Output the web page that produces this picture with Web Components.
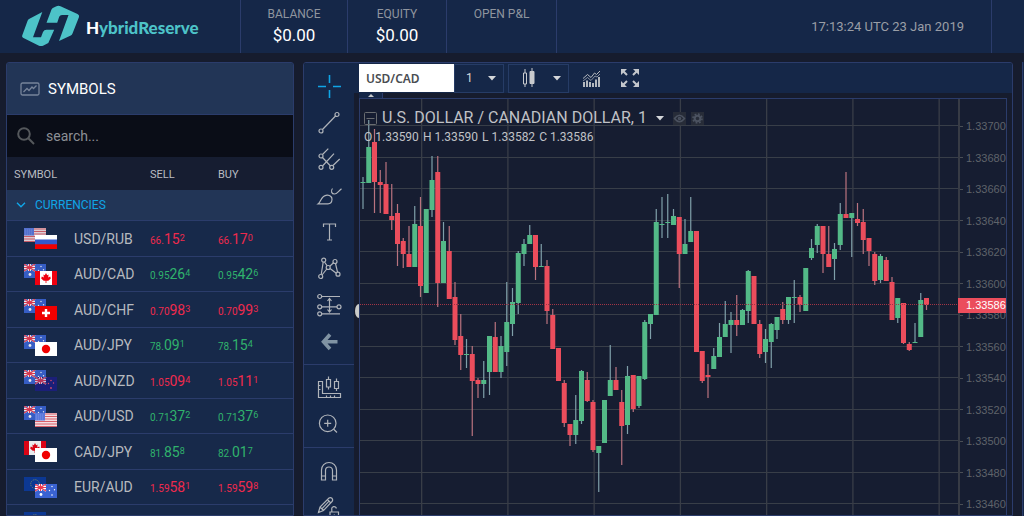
<!DOCTYPE html>
<html lang="en">
<head>
<meta charset="utf-8">
<title>HybridReserve trading terminal</title>
<style>
:root{--line:#2b3c6b;--bar:#152748;--page:#161c2e;--raised:#223556;--ink:#c3c6cb;--up:#53b987;--down:#eb4d5c}
html,body{margin:0;height:100%;overflow:hidden;background:var(--page);font-family:Roboto,"Liberation Sans",sans-serif;color:var(--ink)}
</style>
</head>
<body>
<trading-app></trading-app>

<script>
const define = (name, html, setup) => customElements.define(name, class extends HTMLElement {
  constructor() {
    super();
    const t = document.createElement('template');
    t.innerHTML = html;
    this.attachShadow({ mode: 'open' }).append(t.content.cloneNode(true));
    if (setup) setup(this.shadowRoot, this);
  }
});

/* ---------- header ---------- */
define('account-stat', `
<style>
:host{display:flex;flex-direction:column;align-items:center;box-sizing:border-box;padding-top:7px;border-right:1px solid var(--line)}
.label{font-size:12px;line-height:14px;color:#8f959f}
.value{font-size:17px;line-height:20px;margin-top:4px;color:#fff}
</style>
<div class="label"><slot name="label"></slot></div>
<div class="value"><slot></slot></div>`);

define('brand-logo', `
<style>
:host{display:flex;box-sizing:border-box;width:241px;padding-left:20px;align-items:center;border-right:1px solid var(--line)}
a{display:flex;gap:5px;align-items:center;color:#4dc3c8;text-decoration:none;font:900 17px/20px Lato,sans-serif}
span{padding-top:2px}
b{color:#fff;font-weight:900}
svg{display:block}
</style>
<a href="#"><svg width="61" height="50" viewBox="0 0 61 50" fill="#4dc3c8">
<path d="M22.300 10 9 17Q8 17.600 7.600 18.700L2.200 33.500Q1.700 35 3 35.800L18.500 43.500Q21 44.700 23.500 43.500L28.300 41 34.200 27.800H26.500Q24 27.800 23 30L21 35.200H13Z"/>
<path d="M26.500 20.800 31.500 7.600Q32 6.300 33.300 5.700L36.500 4.200Q38.500 3.400 40.500 4.300L57.500 12Q59.600 13 59 15L52.500 31.500Q52 32.800 50.800 33.500L39 39 48.500 13H42Q40 13 39.200 14.800L37.200 20.800Z"/>
</svg><span><b>H</b>ybridReserve</span></a>`);

define('app-header', `
<style>
:host{display:flex;height:53px;background:var(--bar)}
account-stat:nth-of-type(1){width:107px}
account-stat:nth-of-type(2){width:99px}
account-stat:nth-of-type(3){width:110px}
time{flex:1;text-align:right;padding-right:27px;font-size:13px;line-height:53px;color:#9a9ea6;border-right:1px solid var(--line)}
.end{width:32px}
</style>
<brand-logo></brand-logo>
<account-stat><span slot="label">BALANCE</span>$0.00</account-stat>
<account-stat><span slot="label">EQUITY</span>$0.00</account-stat>
<account-stat><span slot="label">OPEN P&amp;L</span></account-stat>
<time datetime="2019-01-23T17:13:24Z">17:13:24 UTC 23 Jan 2019</time>
<div class="end"></div>`);

/* ---------- currency flags ---------- */
const jack = '<path d="M0 0 11 7M11 0 0 7" stroke="#e8eaf6" stroke-width="1.600"/><path d="M5.500 0V7M0 3.500H11" stroke="#fff" stroke-width="3"/><path d="M5.500 0V7M0 3.500H11M0 0 11 7M11 0 0 7" stroke="#ec3a50" stroke-width="1.200"/>';
const star = (x, y, r) => `<circle cx="${x}" cy="${y}" r="${r}" fill="#fff"/>`;
const FLAGS = {
  USD: '<path fill="#f3dfe2" d="M0 0H22V14H0z"/><path d="M0 1H22M0 3.500H22M0 6H22M0 8.500H22M0 11H22M0 13.500H22" stroke="#d9606a" stroke-width="1.200"/><path fill="#5b78dc" d="M0 0H10V7.500H0z"/><path d="M1 2H9M1 4H9M1 6H9" stroke="#8fa5ec" stroke-width=".6" stroke-dasharray="1 1"/>',
  RUB: '<path fill="#fff" d="M0 0H22V14H0z"/><path fill="#3358cc" d="M0 4.500H22V14H0z"/><path fill="#f00000" d="M0 9.300H22V14H0z"/>',
  AUD: '<path fill="#3a63d2" d="M0 0H22V14H0z"/>' + jack + star(6, 10.5, 1.4) + star(17, 2.5, .7) + star(14.5, 6.5, .7) + star(19.5, 5.8, .7) + star(17, 11, .8),
  CAD: '<path fill="#fff" d="M0 0H22V14H0z"/><path fill="#f00010" d="M0 0H5V14H0zM17 0H22V14H17zM11 2 12.200 4.200 13.600 3.600 13.200 6.500 15.200 5.500 15.800 7.400 13.300 9.800H11.400V12H10.600V9.800H8.700L6.200 7.400 6.800 5.500 8.800 6.500 8.400 3.600 9.800 4.200z"/>',
  CHF: '<path fill="#f00000" d="M0 0H22V14H0z"/><path d="M11 3V11M7 7H15" stroke="#fff" stroke-width="2.400"/>',
  JPY: '<path fill="#fff" d="M0 0H22V14H0z"/><circle cx="11" cy="7" r="4.200" fill="#f00000"/>',
  NZD: '<path fill="#1b1f78" d="M0 0H22V14H0z"/><g opacity=".75">' + jack + '</g><g fill="#d44a6a"><circle cx="16" cy="3.500" r=".8"/><circle cx="13.500" cy="6.500" r=".7"/><circle cx="18.500" cy="6" r=".7"/><circle cx="16" cy="11" r=".9"/></g>',
  EUR: '<path fill="#0b3a9c" d="M0 0H22V14H0z"/><circle cx="11" cy="7" r="4.300" fill="none" stroke="#9aa35a" stroke-dasharray="1 1.250"/>'
};
define('pair-flags', `
<style>:host{display:block;width:33px;height:21px}svg{display:block}</style>
<svg width="33" height="21" viewBox="0 0 33 21" aria-hidden="true"></svg>`, (root, host) => {
  const [a, b] = host.getAttribute('pair').split('/');
  root.querySelector('svg').innerHTML = `<svg width="22" height="14" opacity=".9">${FLAGS[a]}</svg><svg x="11" y="7" width="22" height="14">${FLAGS[b]}</svg>`;
});

/* ---------- symbols panel ---------- */
const QUOTES = [
  ['USD/RUB', 'down', '66.', '15', '2', '66.', '17', '0'],
  ['AUD/CAD', 'up', '0.95', '26', '4', '0.95', '42', '6'],
  ['AUD/CHF', 'down', '0.70', '98', '3', '0.70', '99', '3'],
  ['AUD/JPY', 'up', '78.', '09', '1', '78.', '15', '4'],
  ['AUD/NZD', 'down', '1.05', '09', '4', '1.05', '11', '1'],
  ['AUD/USD', 'up', '0.71', '37', '2', '0.71', '37', '6'],
  ['CAD/JPY', 'up', '81.', '85', '8', '82.', '01', '7'],
  ['EUR/AUD', 'down', '1.59', '58', '1', '1.59', '59', '8']
];
define('symbols-panel', `
<style>
:host{display:block;border:1px solid var(--line);border-radius:3px 3px 0 0;background:#17294a;overflow:hidden}
h2{display:flex;align-items:center;gap:8px;margin:0;height:51px;padding-left:13px;background:var(--raised);border-bottom:1px solid var(--line);font-weight:400;font-size:15px;color:#fff}
label{display:flex;align-items:center;gap:11px;height:42px;padding-left:10px;background:#0a0d17}
input{flex:1;min-width:0;border:0;padding:0;background:none;outline:0;font:14px/20px Roboto,sans-serif;color:#fff}
input::placeholder{color:#8d9096;opacity:1}
table{width:100%;border-collapse:separate;border-spacing:0;table-layout:fixed}
th{font-weight:400;text-align:left;padding:0}
thead th{box-sizing:border-box;height:33px;padding-top:2px;font-size:11px;color:#b9bcc2;background:#161d31}
thead th:first-child{padding-left:7px;width:143px}
thead th:nth-child(2){width:68px}
.group th{height:30px;background:var(--raised);border-bottom:1px solid var(--line)}
button{display:flex;align-items:center;gap:9px;border:0;background:none;padding:0 0 0 9px;font:12px/16px Roboto,sans-serif;color:#10a5e6}
tbody td,tbody .sym{padding:0;box-sizing:border-box;height:35px;border-bottom:1px solid var(--line)}
tr:nth-child(odd) td,tr:nth-child(odd) .sym{height:36px}
.sym div{display:flex;align-items:center;gap:17px;padding-left:17px;font-size:14px;line-height:20px;color:#b6b9bf}
tbody td{font-size:10px;white-space:nowrap}
td big{font-size:14px}
td sup{font-size:9px;line-height:0;vertical-align:3px}
.up td{color:#30b26c}.down td{color:#ef2a4d}
</style>
<h2><svg width="20" height="14" fill="none" stroke="#77849a" stroke-width="1.300"><rect x="1" y="1" width="18" height="12" rx="1.500"/><path d="M3.500 10 7 6.500 9 8.500 12 5 13.500 6.500 16.500 3.500"/></svg>SYMBOLS</h2>
<label><svg width="18" height="18" fill="none" stroke="#55585c" stroke-width="2"><circle cx="7" cy="7" r="5.800"/><path d="M11.300 11.300 17 17"/></svg><input type="search" placeholder="search..." aria-label="Search symbols"></label>
<table>
<thead><tr><th>SYMBOL</th><th>SELL</th><th>BUY</th></tr></thead>
<tbody><tr class="group"><th colspan="3"><button type="button"><svg width="10" height="6" fill="none" stroke="#10a5e6" stroke-width="1.400"><path d="M1 .8 5 4.800 9 .8"/></svg>CURRENCIES</button></th></tr></tbody>
<tbody id="rows"></tbody>
</table>`, root => {
  const cell = (a, b, c) => `<td>${a}<big>${b}</big><sup>${c}</sup></td>`;
  const flags = pair => `<pair-flags pair="${pair}"></pair-flags>`;
  root.getElementById('rows').innerHTML = QUOTES.map(q =>
    `<tr class="${q[1]}"><th class="sym" scope="row"><div>${flags(q[0])}${q[0]}</div></th>${cell(q[2], q[3], q[4])}${cell(q[5], q[6], q[7])}</tr>`).join('')
    // still waiting for its first quote
    + `<tr><th class="sym" scope="row"><div>${flags('EUR/CAD')}</div></th><td></td><td></td></tr>`;
});

/* ---------- drawing tools ---------- */
const TOOLS = [
  [['Crosshair', '<path stroke="#10a5e6" stroke-width="1.600" d="M2 13.500H10M17 13.500H25M13.500 2V10M13.500 17V25"/>'],
   ['Trend line', '<circle cx="5" cy="21" r="2"/><circle cx="21" cy="4.500" r="2"/><path d="M6.500 19.500 19.500 6"/>'],
   ['Pitchfork', '<circle cx="5" cy="10" r="2"/><circle cx="5" cy="21.300" r="2"/><circle cx="15.700" cy="21.300" r="2"/><path d="M6.500 8.500 12.300 2.700M6.500 20 18 7.700M17 19.500 23.700 13M6.500 11.500 14.500 20"/>'],
   ['Brush', '<path d="M2.300 20.800C5 19 5 12.500 11 12.200 14.500 12 16.200 14.500 16 16.500 15.800 19 14 20.800 12 20.800ZM16.500 5.500C14.500 8 15.500 11 18.500 11 21 11 22 8.500 25.500 5.800"/>'],
   ['Text', '<path d="M7.500 8V5H19.500V8M13.500 5V21M11 21H16"/>'],
   ['Pattern', '<circle cx="7.700" cy="4.200" r="2"/><circle cx="19" cy="5.500" r="2"/><circle cx="12.200" cy="11.500" r="2"/><circle cx="4.700" cy="20.500" r="2"/><circle cx="22" cy="18.200" r="2"/><path d="M5.200 18.500 7.200 6.200M8.500 6 11.200 9.800M13.800 10.200 17.500 6.800M19.500 7.500 21.500 16.200M6 19 10.800 13M14 12.500 20.300 17.200"/>'],
   ['Forecast', '<circle cx="3.700" cy="4.500" r="2"/><circle cx="3.700" cy="14.800" r="2"/><circle cx="23" cy="14.800" r="2"/><circle cx="3.700" cy="21.800" r="2"/><path d="M5.700 4.500H24M5.700 14.800H21M5.700 21.800H24M13.500 7V19M11.500 9 13.500 6.500 15.500 9M11.500 17.500 13.500 20 15.500 17.500"/>'],
   ['Hide tools', '<path stroke="#8093a3" stroke-width="3.600" d="M14 5.500 7.500 12.800 14 20M8 12.800H21.500"/>']],
  [['Measure', '<path d="M2.500 6.500V22.500H24.500V18.500H6.500V6.500ZM2.500 10.500H4.500M2.500 14.500H4.500M10.500 22V20.500M14.500 22V20.500M18.500 22V20.500"/><path d="M10.500 4.500H14.500V12H10.500ZM12.500 1.500V4.500M12.500 12V14.500M18.500 6.500H22.500V13.500H18.500ZM20.500 3.500V6.500M20.500 13.500V16"/>'],
   ['Zoom in', '<circle cx="11.700" cy="11.300" r="8.300"/><path d="M11.700 7.800V14.800M8.200 11.300H15.200M17.700 17.300 21 20.500"/>']],
  [['Magnet', '<path d="M5.500 22V12A7.500 7.500 0 0 1 20.500 12V22H16.500V12.500A3.500 3.500 0 0 0 9.500 12.500V22ZM5.500 18H9.500M16.500 18H20.500"/>'],
   ['Lock drawings', '<path d="M2.500 17.500 4 12 13 3Q14.500 2 16 3.300 17.300 5 16 6.500L7.500 15.500ZM4 12 7.500 15.500M11.500 4.500 14.700 7.800M5.800 13.800 13 6.200"/><path d="M14 17H22.500V25H14ZM15.800 17V14.500A2.300 2.300 0 0 1 20.400 13.500M18.300 19.500V21.500"/>']]
];
define('tool-rail', `
<style>
:host{display:block;width:50px;background:var(--bar)}
div{display:flex;flex-direction:column;align-items:center;padding:5px 0 4px;border-bottom:1px solid var(--line)}
button{width:50px;height:36px;flex:none;padding:0;border:0;background:none;display:flex;align-items:center;justify-content:center}
div button:nth-child(even){height:37px}
svg{display:block;overflow:visible}
</style>`, root => {
  root.innerHTML += TOOLS.map(g => '<div role="group">' + g.map(([n, p]) =>
    `<button type="button" title="${n}"><svg width="26" height="26" fill="none" stroke="#b0b4ba" stroke-width="1.200">${p}</svg></button>`).join('') + '</div>').join('');
});

/* ---------- chart toolbar ---------- */
define('chart-toolbar', `
<style>
:host{display:flex;height:30px;align-items:center;background:var(--bar);color:#d5d7da}
input{box-sizing:border-box;width:95px;height:28px;border:0;border-radius:0;padding:0 7px;font:600 12px/20px "Noto Sans","Open Sans",sans-serif;color:#4a4d52;background:#fff;outline:0}
button{box-sizing:border-box;height:29px;display:flex;align-items:center;padding:0;border:0;background:none;color:inherit;font:12px/16px Roboto,sans-serif}
.box{border:1px solid #263c66}
.interval{width:50px;padding-left:11px;gap:15px}
.kind{width:61px;padding-left:12px;gap:17px;margin-left:4px}
.ind{margin-left:13px}
.full{margin-left:20px}
svg{display:block}
</style>
<input type="text" value="USD/CAD" aria-label="Symbol">
<button type="button" class="box interval">1<svg width="8" height="5" fill="#d5d7da"><path d="M0 0H8L4 4.500z"/></svg></button>
<button type="button" class="box kind" title="Candles"><svg width="15" height="20" fill="none" stroke="#c8cacd"><path d="M4 1V5M4 16V19M2.500 5H5.500V16H2.500ZM11 0V19"/><path fill="#c8cacd" d="M9 3.500H13V15.500H9z"/></svg><svg width="8" height="5" fill="#d5d7da"><path d="M0 0H8L4 4.500z"/></svg></button>
<button type="button" class="ind" title="Indicators"><svg width="19" height="17" fill="none" stroke="#b4b8be"><path stroke-width="2" d="M2 17V12M5 17V10.500M8 17V12M11 17V13M14 17V9.500M17 17V7"/><path d="M1 8.500 5.500 4.500 9 7.500 12.500 3 14.500 4.500 18 1"/><path stroke-width=".7" d="M1 11 5.500 7.500 9 10.500 13 6 15 7 18 4"/></svg></button>
<button type="button" class="full" title="Full screen"><svg width="18" height="18" fill="#c4c7cc" stroke="#c4c7cc" stroke-width="2"><path stroke="none" d="M0 0H6L0 6zM18 0V6L12 0zM0 18V12L6 18zM18 18H12L18 12z"/><path d="M2 2 6 6M16 2 12 6M2 16 6 12M16 16 12 12"/></svg></button>`);

/* ---------- price chart ---------- */
// high, body top, body bottom, low, direction (1 = rising)
const CANDLES = [
[177,182,183,209,1],[120,147,183,183,1],[129,142,182,213,0],[170,182,185,213,0],[162,184,214,214,0],[184,216,220,230,0],[204,213,244,266,0],[238,241,254,268,0],[226,254,267,267,0],[206,224,267,267,1],
[197,226,286,297,0],[209,209,293,293,1],[156,180,210,217,1],[156,172,283,307,0],[222,241,283,283,1],[226,251,299,299,0],[282,297,340,345,0],[314,336,355,370,0],[339,354,355,368,1],[346,354,381,436,0],
[378,380,384,398,0],[361,380,384,398,1],[336,336,372,395,1],[322,337,372,372,0],[336,346,372,378,1],[282,322,352,366,1],[288,302,324,336,1],[251,253,303,314,1],[239,244,254,266,1],[225,235,244,244,1],
[235,235,267,280,0],[244,266,267,267,1],[260,266,311,324,0],[309,315,349,349,0],[348,348,381,381,0],[380,383,423,427,0],[424,424,435,446,0],[395,420,435,444,1],[370,371,421,424,1],[372,380,401,402,0],
[400,402,450,452,0],[446,446,453,492,1],[400,400,443,443,1],[345,380,396,396,1],[367,380,390,390,0],[390,402,426,465,0],[366,376,425,434,1],[375,375,409,412,0],[376,376,406,408,1],[320,322,379,380,1],
[314,314,324,339,1],[209,222,315,315,1],[197,224,225,238,1],[194,222,223,238,1],[209,216,225,225,1],[217,217,254,288,0],[219,244,254,254,1],[197,231,242,242,1],[231,231,352,352,0],[351,351,381,383,0],
[364,375,377,398,0],[348,356,369,369,1],[323,337,357,357,1],[301,324,337,337,1],[312,320,325,353,1],[295,320,325,336,0],[309,310,325,325,1],[270,271,311,323,1],[276,276,324,324,0],[320,324,354,358,0],
[329,339,352,363,1],[323,324,342,368,1],[317,317,330,339,1],[302,309,320,324,0],[297,297,320,324,1],[280,297,298,323,1],[295,297,305,312,0],[268,268,311,311,1],[239,248,258,260,1],[224,226,245,253,1],
[226,226,254,273,0],[226,254,267,267,0],[243,249,259,280,1],[203,214,245,250,1],[172,214,218,218,0],[213,213,218,257,1],[203,219,223,226,0],[209,222,240,254,0],[238,238,251,266,0],[252,254,281,285,0],
[254,256,280,283,1],[257,260,281,281,0],[277,282,320,320,0],[298,298,318,323,1],[303,303,343,344,0],[342,344,350,351,0],[323,342,343,343,1],[293,300,337,337,1],[298,298,305,310,0]
];
const PRICES = ['1.33700','1.33680','1.33660','1.33640','1.33620','1.33600','1.33580','1.33560','1.33540','1.33520','1.33500','1.33480','1.33460'];
define('price-chart', `
<style>
:host{display:flex;position:relative;box-sizing:border-box;border:1px solid var(--line);background:#161d31}
.plot{flex:1;min-width:0;height:417px;display:block;overflow:hidden}
ol{list-style:none;margin:0;padding:11px 0 0;width:48px;box-sizing:border-box;border-left:2px solid #373b45;border-bottom:1px solid #3a3e48;height:417px;overflow:hidden;font:11px/14px "Liberation Sans",sans-serif;color:#5f636a}
li{height:32px;display:flex;align-items:center}
li:nth-child(even){height:31px}
li::before{content:"";width:3px;height:1px;background:#4a4e55;margin-right:3px}
output{position:absolute;right:0;top:199px;width:48px;box-sizing:border-box;padding-left:8px;background:var(--down);color:#fff;font:11px/15px "Liberation Sans",sans-serif}
.legend{position:absolute;left:4px;top:8px;color:#c0c2c6}
.title{display:flex;align-items:center;font-size:16px;line-height:22px;gap:5px}
.title span{padding-right:4px}
.title button{display:flex;padding:0;border:0;background:none}
.title .mini{background:#272c38}
.title .first{margin-left:4px}
.ohlc{display:flex;gap:4px;font-size:12px;line-height:16px}
</style>
<svg class="plot"></svg>
<ol></ol>
<output>1.33586</output>
<div class="legend">
<div class="title"><button type="button" title="Collapse"><svg width="13" height="13" fill="none" stroke="#696c70"><rect x=".5" y=".5" width="12" height="12" rx="1"/><path d="M2.500 6.500H10.500"/></svg></button><span>U.S. DOLLAR / CANADIAN DOLLAR, 1</span><svg width="8" height="5" fill="#d5d7da"><path d="M0 0H8L4 4.500z"/></svg>
<button type="button" class="mini first" title="Hide"><svg width="13" height="13" fill="none" stroke="#4b5260" stroke-width="1.500"><path d="M1.500 6.500Q6.500 0 11.500 6.500 6.500 13 1.500 6.500Z"/><circle cx="6.500" cy="6.500" r="1"/></svg></button>
<button type="button" class="mini" title="Settings"><svg width="13" height="13" fill="none" stroke="#4b5260"><circle cx="6.500" cy="6.500" r="2.800" stroke-width="2"/><circle cx="6.500" cy="6.500" r="4.500" stroke-width="1.600" stroke-dasharray="1.800 1.730"/></svg></button></div>
<div class="ohlc"><span>O 1.33590</span><span>H 1.33590</span><span>L 1.33582</span><span>C 1.33586</span></div>
</div>`, root => {
  const ox = 360, oy = 99;
  let s = '';
  for (let i = 0; i < 13; i++) s += `<rect x="0" y="${Math.round(125 + i * 31.5) - oy}" width="100%" height="1" fill="#383e48"/>`;
  for (let i = 0; i < 7; i++) s += `<rect x="${421 + i * 86.25 - ox}" y="0" width="1.300" height="100%" fill="#383d47"/>`;
  s += '<rect x="0" y="416" width="100%" height="1" fill="#3a3e48"/>';
  CANDLES.forEach(([h, t, b, l, up], i) => {
    const x = 363 + i * 5.75 - ox;
    s += `<rect x="${x - .6}" y="${h - oy}" width="1.200" height="${l - h}" fill="${up ? '#7f9fa9' : '#b9737f'}"/>
      <rect x="${x - 2.5}" y="${t - oy}" width="5" height="${b - t}" fill="${up ? '#53b987' : '#eb4d5c'}"/>`;
  });
  s += '<line x1="0" x2="100%" y1="205.500" y2="205.500" stroke="#a23546" stroke-dasharray="1 1"/>';
  root.querySelector('svg').innerHTML = s;
  root.querySelector('ol').innerHTML = PRICES.map(p => `<li>${p}</li>`).join('');
});

/* ---------- chart panel and page ---------- */
define('chart-panel', `
<style>
:host{display:flex;border:1px solid var(--line);border-radius:3px 3px 0 0;overflow:hidden}
.gutter{width:5px;display:flex;flex-direction:column}
.gutter i{height:30px;background:var(--bar)}
.gutter button{margin:211px 0 0 1px;width:4px;height:14px;padding:0;border:0;background:#c9cbc9;border-radius:4px 0 0 4px / 7px 0 0 7px}
.col{flex:1;min-width:0}
.tab{display:flex;justify-content:center;align-items:center;width:24px;height:5px;padding:0;border:0;border-right:1px solid var(--line);background:var(--bar)}
price-chart{margin-right:5px}
</style>
<tool-rail></tool-rail>
<div class="gutter"><i></i><button type="button" title="Toggle tools"></button></div>
<div class="col"><chart-toolbar></chart-toolbar>
<button type="button" class="tab" title="Hide toolbar"><svg width="6" height="3" fill="#c8cacd"><path d="M0 3 3 0 6 3z"/></svg></button>
<price-chart></price-chart></div>`);

define('trading-app', `
<style>
:host{display:flex;flex-direction:column;height:100vh}
app-header{flex:none}
main{flex:1;min-height:0;display:flex;gap:9px;padding:9px 0 0 6px;overflow:hidden}
symbols-panel{width:286px;flex:none}
chart-panel{flex:1;min-width:0}
aside{width:2px;flex:none;box-sizing:border-box;border-left:1px solid var(--line);background:var(--bar)}
</style>
<app-header></app-header>
<main><symbols-panel></symbols-panel><chart-panel></chart-panel><aside></aside></main>`);
</script>
</body>
</html>
